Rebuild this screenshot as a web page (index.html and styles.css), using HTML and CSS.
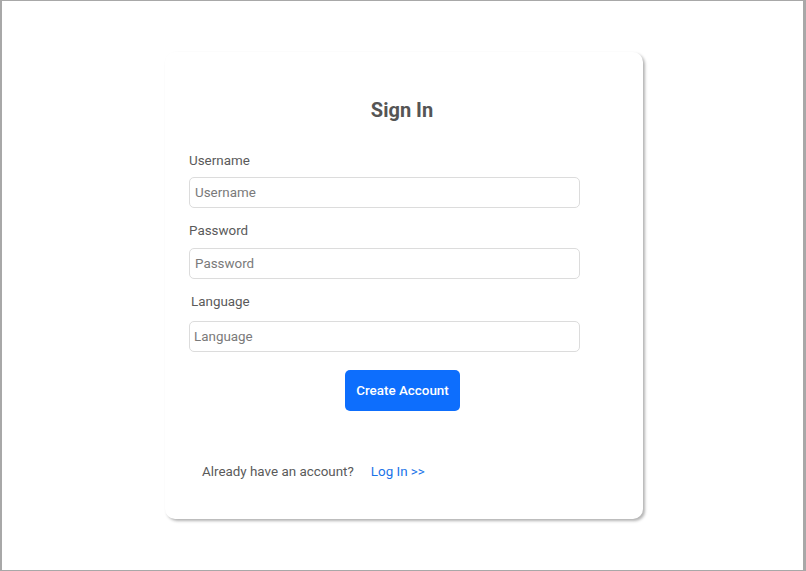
FILE: index.html
```html
<!DOCTYPE html>
<html lang="en">
<head>
<meta charset="utf-8">
<title>Sign In</title>
<link rel="stylesheet" href="styles.css">
</head>
<body>
<div class="frame">
  <div class="card">
    <h1 class="title">Sign In</h1>
    <form class="form">
      <label class="label" for="u">Username</label>
      <input class="input" id="u" type="text" placeholder="Username">
      <label class="label label-gap" for="p">Password</label>
      <input class="input" id="p" type="password" placeholder="Password">
      <label class="label label-gap label-indent" for="l">Language</label>
      <input class="input input-lang" id="l" type="text" placeholder="Language">
    </form>
    <div class="actions">
      <button class="btn" type="button">Create Account</button>
    </div>
    <div class="footer">
      <span class="footer-text">Already have an account?</span>
      <a class="footer-link" href="#">Log In &gt;&gt;</a>
    </div>
  </div>
</div>
</body>
</html>
```
FILE: styles.css
```css
* { box-sizing: border-box; }
html, body { margin: 0; padding: 0; background: #fff; }
body { font-family: Roboto, "Liberation Sans", Arial, sans-serif; }

.frame {
  width: 806px;
  height: 571px;
  border-top: 1px solid #a8a8a8;
  border-left: 2px solid #a8a8a8;
  border-right: 3px solid #a8a8a8;
  border-bottom: 1px solid #a8a8a8;
  padding: 51px 0 0 163px;
  overflow: hidden;
}

.card {
  width: 478px;
  height: 467px;
  background: #fff;
  border-radius: 10px;
  box-shadow: 2px 2px 3px rgba(0,0,0,0.3);
  padding: 46px 0 0 24px;
}

.title {
  margin: 0;
  font-size: 20px;
  line-height: 24px;
  font-weight: 700;
  color: #555;
  text-align: center;
  padding-right: 28px;
}

.form {
  display: flex;
  flex-direction: column;
  width: 391px;
  margin-top: 31px;
}

.label {
  font-size: 13.4px;
  line-height: 16px;
  color: #5a5a5a;
  margin-bottom: 8px;
}
.label-gap { margin-top: 15px; margin-bottom: 9px; }
.label-indent { padding-left: 2px; margin-bottom: 11px; }

.input {
  width: 391px;
  height: 31px;
  border: 1px solid #dcdcdc;
  border-radius: 5px;
  padding: 0 5px;
  font-family: inherit;
  font-size: 13.4px;
  color: #333;
  outline: none;
}
.input::placeholder { color: #7a7a7a; }
.input-lang { padding-left: 4px; }

.actions {
  display: flex;
  justify-content: center;
  margin-top: 18px;
  padding-right: 27px;
}

.btn {
  width: 115px;
  height: 41px;
  background: #0d6efd;
  color: #fff;
  border: none;
  border-radius: 5px;
  font-family: inherit;
  font-size: 13.4px;
  font-weight: 500;
  padding: 0;
}

.footer {
  display: flex;
  gap: 17px;
  margin-top: 53px;
  padding-left: 13px;
  font-size: 13.4px;
  line-height: 16px;
}
.footer-text { color: #5a5a5a; }
.footer-link { color: #1a73e8; text-decoration: none; }
```
